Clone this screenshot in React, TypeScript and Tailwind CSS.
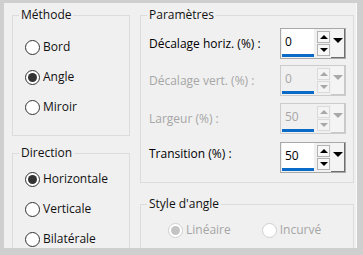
import React from 'react';

function Radio({ label, checked, disabled }: { label: string; checked?: boolean; disabled?: boolean }) {
  return (
    <div className="flex h-[30px] items-center gap-[3px]">
      <span
        className={
          disabled
            ? 'flex h-[15px] w-[15px] items-center justify-center rounded-full border border-[#cfcfcf] bg-white'
            : 'flex h-[15px] w-[15px] items-center justify-center rounded-full border border-[#333333] bg-white'
        }
      >
        {checked && (
          <span className={disabled ? 'h-[9px] w-[9px] rounded-full bg-[#c4c4c4]' : 'h-[9px] w-[9px] rounded-full bg-[#333333]'} />
        )}
      </span>
      <span className={disabled ? 'text-[#a6a6a6]' : 'text-[#111111]'}>{label}</span>
    </div>
  );
}

function Spin({ value, disabled }: { value: string; disabled?: boolean }) {
  return (
    <div className={disabled ? 'flex h-[31px] w-[66px] border border-[#cccccc] bg-[#f0f0f0]' : 'flex h-[31px] w-[66px] border border-[#a9a9a9] bg-[#f0f0f0]'}>
      <div
        className={
          disabled
            ? 'mb-[1px] ml-[1px] flex w-[32px] items-center border-b-[3px] border-[#0a6ac7] bg-[#f0f0f0] pl-[3px] text-[#a6a6a6]'
            : 'mb-[1px] ml-[1px] flex w-[32px] items-center border-b-[3px] border-[#0a6ac7] bg-white pl-[3px] text-black'
        }
      >
        {value}
      </div>
      {/* up / down buttons */}
      <div className="ml-[3px] flex flex-col justify-center gap-[1px]">
        <div className={disabled ? 'flex h-[12px] w-[13px] items-center justify-center border border-[#dadada] bg-[#f4f4f4]' : 'flex h-[12px] w-[13px] items-center justify-center border border-[#b4b4b4] bg-[#f7f7f7]'}>
          <span className={disabled ? 'h-0 w-0 border-x-[4px] border-b-[4px] border-x-transparent border-b-[#a8a8a8]' : 'h-0 w-0 border-x-[4px] border-b-[4px] border-x-transparent border-b-black'} />
        </div>
        <div className={disabled ? 'flex h-[12px] w-[13px] items-center justify-center border border-[#dadada] bg-[#f4f4f4]' : 'flex h-[12px] w-[13px] items-center justify-center border border-[#b4b4b4] bg-[#f7f7f7]'}>
          <span className={disabled ? 'h-0 w-0 border-x-[4px] border-t-[4px] border-x-transparent border-t-[#a8a8a8]' : 'h-0 w-0 border-x-[4px] border-t-[4px] border-x-transparent border-t-black'} />
        </div>
      </div>
      {/* dropdown button */}
      <div className={disabled ? 'ml-[1px] flex w-[14px] justify-center border-r border-b border-[#c8c8c8] bg-[#f4f4f4] pt-[9px]' : 'ml-[1px] flex w-[14px] justify-center border-r border-b border-[#6e6e6e] bg-[#f4f4f4] pt-[9px]'}>
        <span className={disabled ? 'h-0 w-0 border-x-[5px] border-t-[5px] border-x-transparent border-t-[#a8a8a8]' : 'h-0 w-0 border-x-[5px] border-t-[5px] border-x-transparent border-t-black'} />
      </div>
    </div>
  );
}

export default function App() {
  return (
    <div
      className="h-[255px] w-[363px] overflow-hidden bg-[#cfcfcf] pt-[3px] pr-[6px] pb-[7px] pl-[4px] text-[12px] leading-[16px]"
      style={{ fontFamily: '"Open Sans", "Noto Sans", sans-serif' }}
    >
      <div className="flex h-full gap-[10px] overflow-hidden border-r border-[#fafafa] bg-[#f0f0f0] pt-[4px] pl-[8px]">
        {/* left column */}
        <div className="flex w-[118px] shrink-0 flex-col">
          <fieldset className="h-[129px] shrink-0 border border-[#dcdcdc]">
            <legend className="ml-[6px] px-[2px] text-[#111111]">Méthode</legend>
            <div className="pt-[9px] pl-[12px]">
              <Radio label="Bord" />
              <Radio label="Angle" checked />
              <Radio label="Miroir" />
            </div>
          </fieldset>
          <fieldset className="mt-[9px] h-[125px] shrink-0 border border-[#dcdcdc]">
            <legend className="ml-[6px] px-[2px] text-[#111111]">Direction</legend>
            <div className="pt-[3px] pl-[12px]">
              <Radio label="Horizontale" checked />
              <Radio label="Verticale" />
              <Radio label="Bilatérale" />
            </div>
          </fieldset>
        </div>

        {/* right column */}
        <div className="flex w-[214px] shrink-0 flex-col">
          <fieldset className="h-[176px] shrink-0 border border-[#dcdcdc]">
            <legend className="ml-[6px] px-[2px] text-[#111111]">Paramètres</legend>
            <div className="pt-[5px] pr-[7px] pl-[8px]">
              <div className="flex items-center justify-between">
                <span className="text-black">Décalage horiz. (%) :</span>
                <Spin value="0" />
              </div>
              <div className="mt-[6px] flex items-center justify-between">
                <span className="text-[#a6a6a6]">Décalage vert. (%) :</span>
                <Spin value="0" disabled />
              </div>
              <div className="mt-[7px] flex items-center justify-between">
                <span className="text-[#a6a6a6]">Largeur (%) :</span>
                <Spin value="50" disabled />
              </div>
              <div className="mt-[8px] flex items-center justify-between">
                <span className="mb-[8px] text-black">Transition (%) :</span>
                <Spin value="50" />
              </div>
            </div>
          </fieldset>
          <fieldset className="mt-[13px] h-[80px] shrink-0 border border-[#dcdcdc]">
            <legend className="ml-[6px] px-[2px] text-[#111111]">Style d'angle</legend>
            <div className="flex gap-[31px] pt-[3px] pl-[27px]">
              <Radio label="Linéaire" checked disabled />
              <Radio label="Incurvé" disabled />
            </div>
          </fieldset>
        </div>
      </div>
    </div>
  );
}
